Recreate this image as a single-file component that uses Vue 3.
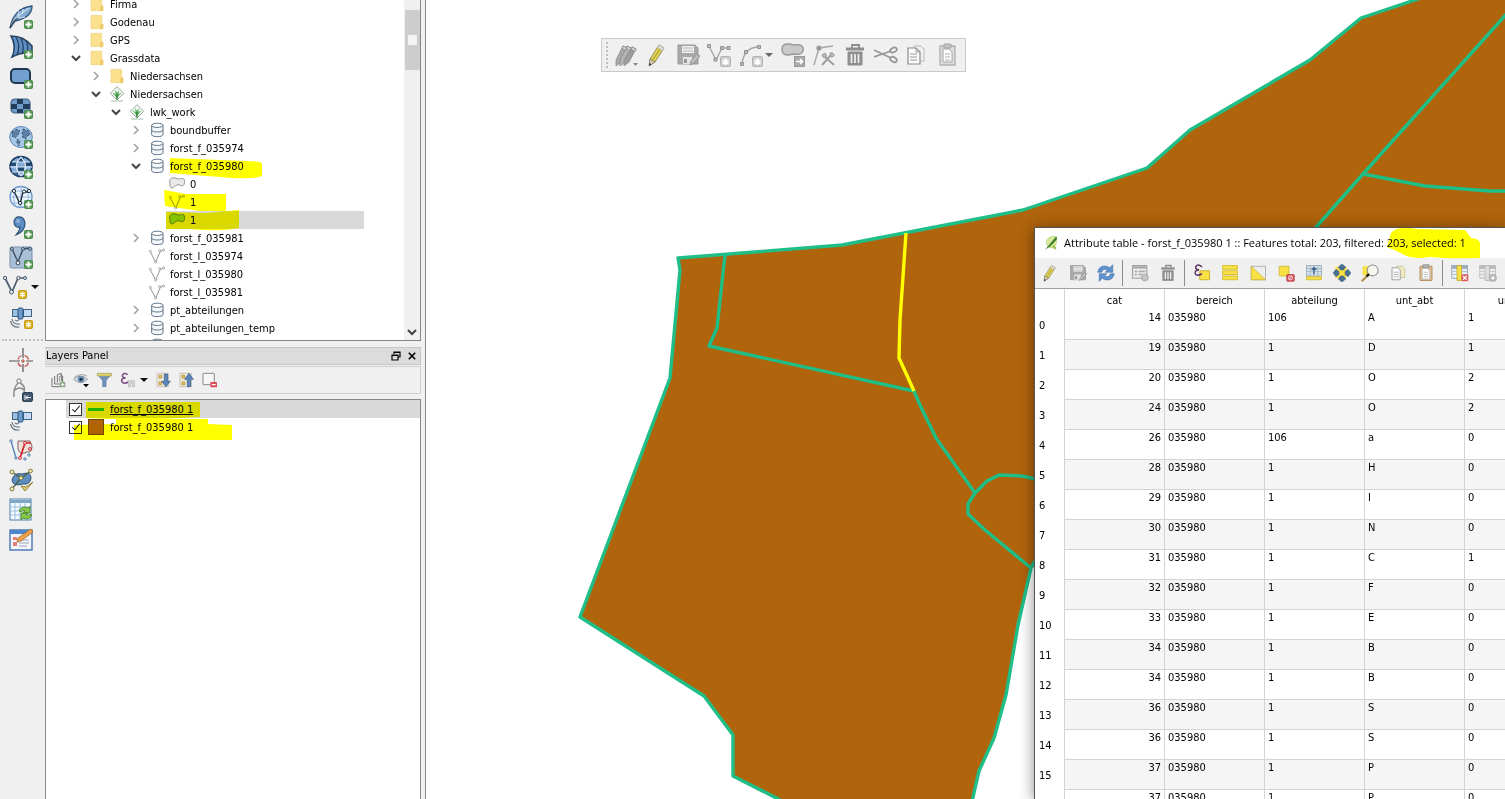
<script setup>
import { ref } from 'vue'

const plus = '<rect x="15.5" y="15.5" width="8" height="8" rx="1" fill="#5a9a58" stroke="#4a8a4c"/><path d="M19.5 16.500v6M16.500 19.500h6" stroke="#fff" stroke-width="1.8"/>'
const star = '<rect x="15.5" y="15.5" width="8" height="8" rx="1" fill="#d9ae1e" stroke="#c79c10"/><path d="M19.5 16.500v6M17 18l5 3M17 21l5-3" stroke="#fff" stroke-width="1.4"/>'
const grayStar = '<rect x="13.5" y="13.5" width="10" height="10" rx="1" fill="#cdcdcd" stroke="#b3b3b3"/><path d="M18.500 15v7M15.500 17l6 3.500M15.500 20.500l6-3.500" stroke="#fff" stroke-width="1.6"/>'
const satellite = '<rect x="3.500" y="4.500" width="7" height="7" fill="#9dbfe2" stroke="#3e6488"/><rect x="14.500" y="4.500" width="8" height="7" fill="#c5daf0" stroke="#3e6488"/><rect x="9" y="3" width="5" height="11" rx="1.500" fill="#6e9ccb" stroke="#234f78"/><path d="M10 14q-1 3-4 1M3 14q1 6 8 5M1.500 16q1.500 7 9 6" fill="none" stroke="#6d7c89" stroke-width="1.200"/>'
const trash = '<path d="M3 6h18" stroke="#8e8e8e" stroke-width="3"/><path d="M9 5V2h7v3" fill="none" stroke="#8e8e8e" stroke-width="1.800"/><path d="M5 9h14v13H5z" fill="#8e8e8e" stroke="#8e8e8e"/><path d="M8.500 11v9M12 11v9M15.500 11v9" stroke="#eee" stroke-width="1.800"/>'
const floppy = '<path d="M2 2h17l3 3v16H2z" fill="#a9a9a9" stroke="#999"/><rect x="6" y="3" width="12" height="7" fill="#efefef"/><path d="M7 5h10M7 8h10" stroke="#b5b5b5"/><rect x="7" y="14" width="9" height="7" fill="#e4e4e4"/><rect x="8" y="16" width="3" height="4" fill="#999"/><path d="M14 22l1-4 6-7 3 2-6 7z" fill="#bcbcbc" stroke="#929292"/>'
const pencil = '<path d="M5 16L14 2l5 3-9 14-5 3z" fill="#e3d455" stroke="#88824c" stroke-width=".9"/><path d="M7.500 17.500L16.500 3.500" stroke="#b4a536" stroke-width="1.300"/><path d="M14 2l5 3-1.500 2.500-5-3z" fill="#e2e2e2" stroke="#aaa" stroke-width=".7"/><path d="M5 16l5 3-6 4z" fill="#d8cdb2" stroke="#7d796c" stroke-width=".8"/><path d="M4 23l.5-3 2 1.300z" fill="#333"/>'

// every glyph is drawn on a 24 x 24 grid
const icons = {
  feather: '<path d="M1 23C3 12 8 3 23 1c0 9-7 13-17 15z" fill="#83a9d1" stroke="#31557d" stroke-width="1.300"/><path d="M2 20C7 12 12 8 20 3M9 12l1-6M13 9l1-5M8 13l8-1" fill="none" stroke="#cbdff3" stroke-width="1.200"/><path d="M1 23q4-8 8-10" fill="none" stroke="#333f4b" stroke-width="1.200"/>' + plus,
  shell: '<path d="M2 1q13 0 21 10v7q-10-1-20 4Q8 11 2 1z" fill="#5f8fc4" stroke="#24415f" stroke-width="1.500"/><path d="M7 2q5 9 1 18M12 4q4 7 1 15M17 6q3 6 1 12" fill="none" stroke="#24415f" stroke-width="1.300"/>' + plus,
  raster: '<rect x="2" y="4" width="19" height="14" rx="4" fill="#729fcf" stroke="#1f3954" stroke-width="2"/>' + plus,
  virtual: '<rect x="2" y="4" width="19" height="14" rx="4" fill="#6f9bcb" stroke="#41607f" stroke-width="1.200"/><path d="M8 4h6v5H8zM2 9h6v5H2zM14 9h7v5h-7zM8 14h6v4H8z" fill="#213d59"/>' + plus,
  globe: '<ellipse cx="12" cy="12" rx="11.300" ry="10.500" fill="#a8c6e6" stroke="#5e88b5"/><path d="M3 7l5-3 3 2-2 4-3 3-3-2zM8 14l3 2-1 5-2-3zM14 4l6 2 1 4-3 1-1 3-3-1-1-4z" fill="#5d7fa3" stroke="#33506e" stroke-dasharray="2 2"/>' + plus,
  grid: '<ellipse cx="12" cy="11.500" rx="11" ry="10" fill="#83abd8" stroke="#183b61" stroke-width="1.500"/><path d="M9 2h6v5H9zM2 7h6v4H2zM16 7h6v4h-6zM9 12h6v4H9zM4 17h5v3zM15 17h5l-5 3z" fill="#23496f"/><path d="M1 12h22M3 7h18M3 17h18M12 2Q3 11 12 21M12 2q9 10 0 19" fill="none" stroke="#dceafa" stroke-width="1.200"/>' + plus,
  wfs: '<ellipse cx="12" cy="12" rx="11" ry="10.500" fill="#edf4fc" stroke="#6f9bcc" stroke-width="1.400"/><path d="M1 12h22M4 6h16M4 18h16M12 1v22M6 3q-3 9 0 18M18 3q3 9 0 18" fill="none" stroke="#8fb3dc" stroke-width=".9"/><path d="M5 6l6 13 3-12h6" fill="none" stroke="#1d2c3b" stroke-width="1.300"/><g fill="#fff" stroke="#1d2c3b"><circle cx="5" cy="6" r="1.600"/><circle cx="11" cy="18" r="1.600"/><circle cx="15" cy="6.500" r="1.600"/><circle cx="20" cy="6" r="1.600"/></g>' + plus,
  comma: '<path d="M5 7c0-7 10-7 11 1 0 7-4 10-9 12 3-4 4-5 4-8C8 13 5 11 5 7z" fill="#5e8ec4" stroke="#30527a" stroke-width="1.200"/><circle cx="9" cy="6" r="2" fill="#8db3dc"/>' + plus,
  newvector: '<rect x="1" y="2" width="22" height="21" rx="1.500" fill="#a9bfd6" stroke="#7891ab"/><path d="M3 4l6 13 5-13 8-1" fill="none" stroke="#3d5268" stroke-width="1.400"/><circle cx="9" cy="18" r="1.900" fill="#fff" stroke="#31465b"/><g fill="#e7eef5" stroke="#31465b"><circle cx="3" cy="4" r="1.400"/><circle cx="14" cy="4" r="1.400"/><circle cx="21" cy="4" r="1.400"/></g>' + plus,
  vedit: '<path d="M2 3l7 14 6-14h8" fill="none" stroke="#4b5b6b" stroke-width="1.700"/><g fill="#dfe7ef" stroke="#4b5b6b"><circle cx="2" cy="3" r="1.700"/><circle cx="8.500" cy="17" r="2"/><circle cx="15.500" cy="3" r="1.700"/><circle cx="22" cy="3" r="1.500"/></g>' + star,
  gps: satellite + star,
  cross: '<path d="M0 13h11M17 13h7M14 0v10M14 16v8" stroke="#555" stroke-width="1.200"/><path d="M9 11.500a5.500 5.500 0 0 1 3.500-4M15.500 7.500a5.500 5.500 0 0 1 4 4M19.500 14.500a5.500 5.500 0 0 1-4 4M12.500 18.500a5.500 5.500 0 0 1-3.500-4M12 13h4M14 11v4" fill="none" stroke="#c0504a" stroke-width="1.200"/>',
  compass: '<circle cx="10" cy="3" r="2.200" fill="none" stroke="#777"/><path d="M9 5q-5 5-4 14M11 5q6 3 4 9M6 12q5-4 9 0" fill="none" stroke="#8a8a8a" stroke-width="1.400"/><rect x="13.500" y="14.500" width="10" height="9" rx="1.500" fill="#40566e" stroke="#2e4359"/><path d="M16 17v5M22 19.500h-5M19 17.500l-2 2 2 2" fill="none" stroke="#fff"/>',
  satellite,
  simplify: '<path d="M9 3h12l2 5q0 7-5 6-7 4-9-3z" fill="#f1dfdc" stroke="#7b6663"/><path d="M2 3l5 17" stroke="#4f80b5" stroke-width="1.300"/><path d="M11 20l5-15h6" fill="none" stroke="#d3202c" stroke-width="1.700"/><g fill="#fff" stroke="#4678ad"><circle cx="2" cy="3" r="1.200"/><circle cx="7" cy="20" r="1.200"/><circle cx="16" cy="21" r="1.200"/><circle cx="20" cy="17" r="1.200"/></g><g fill="#fff" stroke="#d3202c"><circle cx="11" cy="20" r="1.400"/><circle cx="16" cy="5" r="1.400"/><circle cx="21" cy="11" r="1.400"/></g>',
  topology: '<path d="M3 12Q5 4 13 6q9-3 9 4-1 7-8 6-10 3-11-4z" fill="#5e8dc0" stroke="#315477"/><path d="M3 4l9 6L3 21M12 10l10-7" fill="none" stroke="#4e5b36" stroke-width="1.200"/><path d="M12 18l4 5 8-9-7 5z" fill="#e4d174" stroke="#94803a"/><g fill="#f3edb3" stroke="#7b7a40"><circle cx="3" cy="4" r="2"/><circle cx="21.500" cy="3" r="1.900"/><circle cx="12" cy="10" r="1.900"/><circle cx="3" cy="21" r="2"/></g>',
  refreshtable: '<rect x="1" y="1" width="21" height="21" fill="#f4faff" stroke="#4d7fa8"/><path d="M1 2h21v3H1z" fill="#7ba6ca"/><path d="M1 9h21M1 13h21M1 17h21M6 4v18M11 4v18M16 4v18" stroke="#9dc3df"/><path d="M10 13q3-6 9-3l2-2v7h-7l2-2q-3-1-4 1zM23 17q-3 6-9 3l-2 2v-7h7l-2 2q3 1 4-1z" fill="#86c94a" stroke="#3f7e20" stroke-width=".8"/>',
  form: '<rect x="1" y="2" width="22" height="20" fill="#f4f4fb" stroke="#3a6aae" stroke-width="1.300"/><path d="M1 2h22v4H1z" fill="#4e86cb"/><path d="M4 9h4v3H4zM4 14h4v4H4z" fill="#e37f74"/><path d="M10 12h10M10 15h10M10 18h8" stroke="#9ca5b3"/><path d="M8 14l1-4L22 1l2 3L12 13z" fill="#eda14c" stroke="#b06d23" stroke-width=".8"/>',

  folder: '<path d="M3 2h16v20H3z" fill="#fbe08d" stroke="#efd078"/><path d="M18 15h3v7h-4z" fill="#f3d06c" stroke="#e6c05a"/>',
  grass: '<path d="M12 1l10 10-10 10L2 11z" fill="#f3faf3" stroke="#8d9b8e" stroke-width="1.300"/><path d="M12 20Q10 14 5 10q3 0 5 3L9 6l3 4 3-4-1 7q2-3 5-3-5 4-7 10z" fill="#55ab5c"/><path d="M12 20v-8" stroke="#1f6b2c" stroke-width="1.400"/><path d="M3 22.500h18" stroke="#a5bca8" stroke-width="1.500"/>',
  database: '<path d="M4 5v14c0 4 17 4 17 0V5" fill="#f5f8fa" stroke="#5d7286" stroke-width="1.500"/><ellipse cx="12.500" cy="5" rx="8.500" ry="3.200" fill="#fff" stroke="#5d7286" stroke-width="1.500"/><path d="M4 12c0 4 17 4 17 0" fill="none" stroke="#5d7286" stroke-width="1.500"/>',
  polygon: '<path d="M1 7c1-5 7-5 11-3 5 2 10-3 11 2 1 7-1 10-6 8-6-3-7 2-12 4-5 0-3-6-4-11z" fill="#e9e9e9" stroke="#8d8d8d" stroke-width="1.400"/>',
  polygreen: '<path d="M1 7c1-5 7-5 11-3 5 2 10-3 11 2 1 7-1 10-6 8-6-3-7 2-12 4-5 0-3-6-4-11z" fill="#86c22f" stroke="#56741f" stroke-width="1.400"/>',
  line: '<path d="M2 6l8 15 7-16 5-2" fill="none" stroke="#8a8a8a" stroke-width="1.400"/><g fill="#fff" stroke="#8a8a8a"><circle cx="2" cy="5" r="1.600"/><circle cx="10" cy="21" r="1.600"/><circle cx="16" cy="4" r="1.600"/><circle cx="22" cy="3" r="1.600"/></g>',

  addgroup: '<path d="M3 9v13h12M7 6v12h12V6h-4M11 16V4l6-2v12" fill="#f4f4f4" stroke="#727272" stroke-width="1.500"/><path d="M14 6v9" stroke="#777"/><rect x="15" y="15" width="8" height="8" rx="1" fill="#8aa687"/><path d="M19 16.500v5M16.500 19h5" stroke="#fff" stroke-width="1.500"/>',
  eye: '<path d="M1 11q10-10 21 0-10 10-21 0z" fill="#dce3ea" stroke="#8b9299" stroke-width="1.300"/><circle cx="12" cy="11" r="5" fill="#6d90b5"/><circle cx="12" cy="11" r="2.300" fill="#1f3148"/><path d="M2 8q9-7 19-2" fill="none" stroke="#777"/><path d="M15 18h9l-4.500 5z" fill="#000"/>',
  funnel: '<path d="M2 3h21l-8 10v9h-5v-9z" fill="#6f94bd" stroke="#57779c"/><path d="M2 2h21v4H2z" fill="#e4d56b" stroke="#a8a05a"/>',
  expression: '<path d="M13 4Q7 0 5 5q0 4 5 4-7 0-6 5 3 5 10 1" fill="none" stroke="#7c4c86" stroke-width="2.200"/><path d="M14 13h9v9h-3v-6h-3v6h-3z" fill="#ddd" stroke="#aaa"/>',
  expand: '<path d="M3 2h17v20H3z" fill="#ece8d8" stroke="#b7b19e"/><path d="M6 5h4v4H6zM6 15h4v4H6z" fill="#e5be55" stroke="#ad8b35"/><path d="M14 3h5v11h4l-6.500 8L10 14h4z" fill="#5b86bd" stroke="#355985"/>',
  collapse: '<path d="M3 2h17v20H3z" fill="#ece8d8" stroke="#b7b19e"/><path d="M6 5h4v4H6zM6 15h4v4H6z" fill="#e5be55" stroke="#ad8b35"/><path d="M14 22h5V11h4l-6.500-9L10 11h4z" fill="#5b86bd" stroke="#355985"/>',
  remove: '<rect x="3" y="2" width="17" height="17" rx="1" fill="#f7f7f7" stroke="#888" stroke-width="1.500"/><rect x="14" y="15" width="10" height="8" rx="1" fill="#da4b57"/><path d="M16 19h6" stroke="#fff" stroke-width="1.800"/>',

  pencils: '<g stroke="#8a8a8a" stroke-width=".8"><path d="M2 17L9 3l4 2-6 14-5 4z" fill="#a9a9a9"/><path d="M6 17l7-14 4 2-6 14-5 4z" fill="#b5b5b5"/><path d="M10 17l8-13 4 2-7 13-5 4z" fill="#9d9d9d"/><path d="M9 3l4 2-1 2.500-4-2zM13 3l4 2-1 2.500-4-2zM18 4l4 2-1 2.500-4-2z" fill="#d6d6d6"/></g><path d="M19 20h5l-2.500 3z" fill="#888"/>',
  pencil,
  floppy,
  addline: '<path d="M2 3l7 14 6-12h7" fill="none" stroke="#a5a5a5" stroke-width="1.400"/><g fill="#bbb" stroke="#929292"><path d="M.5 1.500h3v3h-3zM7 15h3v3H7zM13.500 3.500h3v3h-3zM20 3.500h3v3h-3z"/></g>' + grayStar,
  addcurve: '<path d="M3 21Q5 4 20 4" fill="none" stroke="#a5a5a5" stroke-width="1.400"/><g fill="#bbb" stroke="#929292"><path d="M1.500 19.500h3v3h-3zM5.500 7.500h3v3h-3zM18.500 2.500h3v3h-3z"/></g>' + grayStar,
  move: '<path d="M1 6c0-7 9-5 12-4 8-1 10 2 9 6-2 5-7 3-10 3C5 13 1 12 1 6z" fill="#c9c9c9" stroke="#999" stroke-width="1.400"/><rect x="13.500" y="13.500" width="10" height="10" fill="#ababab" stroke="#999"/><path d="M15 18.500h6M19 16l2.500 2.500L19 21" fill="none" stroke="#fff" stroke-width="1.600"/>',
  node: '<path d="M2 22L7 5l14-2" fill="none" stroke="#aaa" stroke-width="1.500"/><circle cx="7" cy="5" r="2.600" fill="#999"/><path d="M10 22l10-11M12 13l10 9" stroke="#a0a0a0" stroke-width="2"/><path d="M10 12l3-2 2 3-3 2zM18 10q4-1 4 3l-3 1z" fill="#bbb" stroke="#999"/>',
  trash,
  scissors: '<path d="M0 7l17 8M0 14l17-6" stroke="#999" stroke-width="1.700"/><g fill="none" stroke="#929292" stroke-width="1.700"><ellipse cx="19.500" cy="7" rx="3.500" ry="2.300" transform="rotate(-25 19.500 7)"/><ellipse cx="19.500" cy="16.500" rx="3.500" ry="2.300" transform="rotate(30 19.500 16.500)"/></g>',
  copy: '<path d="M9 3h7l3 3v12H9z" fill="#f1f1f1" stroke="#b8b8b8"/><path d="M3 5h8l4 4v12H3z" fill="#fbfbfb" stroke="#8b8b8b" stroke-width="1.200"/><path d="M5 11h7M5 14h7M5 17h7M11 5v4h4" fill="none" stroke="#999"/>',
  paste: '<path d="M4 3h15v19H4z" fill="#dcdcdc" stroke="#b0b0b0" stroke-width="1.300"/><path d="M8 1h7v4H8z" fill="#c2c2c2" stroke="#aaa"/><path d="M7 6h6l3 3v10H7z" fill="#fff" stroke="#a5a5a5"/><path d="M9 11h5M9 14h5M9 17h5" stroke="#aaa"/>',

  refresh: '<path d="M1 11Q3 1 13 3l4 2 4-4v10H11l3-3q-6-3-8 3zM23 13q-2 10-12 8l-4-2-4 4V13h10l-3 3q6 3 8-3z" fill="#5f93cf" stroke="#3a6ca8" stroke-width=".8"/>',
  tablegray: '<path d="M2 2h19v17H2z" fill="#e9e9e9" stroke="#a1a1a1" stroke-width="1.500"/><path d="M2 3h19v3H2z" fill="#a8a8a8"/><path d="M5 10h3M10 10h9M5 14h3M10 14h5" stroke="#aaa" stroke-width="1.800"/><circle cx="18.500" cy="18" r="4.500" fill="#c5c5c5" stroke="#999"/>',
  selexpr: '<path d="M9 9h13v12H9z" fill="#f8e145" stroke="#c3a616"/><path d="M12 4Q7-1 4 3q-2 4 4 5-6 0-5 5 2 4 9 0" fill="none" stroke="#593466" stroke-width="2"/>',
  selall: '<path d="M2 2h20v5H2zM2 9h20v5H2zM2 16h20v5H2z" fill="#f8e145" stroke="#d2b31c"/>',
  invert: '<path d="M3 3h19v18H3z" fill="#ededed" stroke="#a0a0a0"/><path d="M3 3v18h19z" fill="#f8e145" stroke="#cbb024"/>',
  deselect: '<path d="M3 3h13v13H3z" fill="#f8e145" stroke="#cbb024"/><rect x="13" y="14" width="10" height="9" rx="1" fill="#d9525a" stroke="#b53a42"/><circle cx="18" cy="18.500" r="2.700" fill="none" stroke="#fff"/><path d="M16 20.500l4-4" stroke="#fff"/>',
  totop: '<path d="M2 2h20v14H2z" fill="#d4e1ea" stroke="#8ba0af"/><path d="M2 6h20M2 10h20M7 2v14M17 2v14" stroke="#9eb1c0"/><path d="M2 17h20v4H2z" fill="#f8e145" stroke="#cbb024"/><path d="M11 14V8H8l4-5 4 5h-3v6z" fill="#3b658f"/>',
  pan: '<path d="M3 4h15v15H3z" fill="#f8e145"/><path d="M12 0l5 4-3 4h-4L7 4zM12 24l-5-4 3-4h4l3 4zM0 12l4-5 4 3v4l-4 3zM24 12l-4 5-4-3v-4l4-3z" fill="#4c6f94" stroke="#365679" stroke-width=".6"/>',
  zoomto: '<path d="M2 3h11v12H2z" fill="#f8e145"/><circle cx="15.500" cy="8.500" r="7.300" fill="#f7f7f2" fill-opacity=".9" stroke="#8a8a8a" stroke-width="1.400"/><path d="M10 14l-9 9" stroke="#b08b40" stroke-width="2.600"/><path d="M10.500 13.500l-3 3" stroke="#111" stroke-width="3"/>',
  copyrow: '<path d="M10 3h8l3 3v12H10z" fill="#efeac0" stroke="#c4bd8a"/><path d="M4 5h8l3 3v13H4z" fill="#fbfbfb" stroke="#a0a0a0" stroke-width="1.300"/><path d="M6 11h7M6 14h7M6 17h7" stroke="#aaa"/>',
  pasterow: '<path d="M4 3h16v19H4z" fill="#e0c097" stroke="#b5935f" stroke-width="1.300"/><path d="M8 1h8v4H8z" fill="#b8b8b8" stroke="#888"/><path d="M7 6h7l3 3v11H7z" fill="#fff" stroke="#b5b5b5"/><path d="M9 11h6M9 14h6M9 17h6" stroke="#aaa"/>',
  delcol: '<path d="M1 2h21v17H1z" fill="#e9eff4" stroke="#8397a8"/><path d="M1 2h21v4H1zM2 10h5M2 14h5M15 10h6M15 14h6" fill="#9db0c1" stroke="#9db0c1"/><path d="M8 2h6v20H8z" fill="#f8e145" stroke="#c3a616"/><rect x="14" y="14" width="9" height="9" rx="1" fill="#dd5a5e"/><path d="M16 16l5 5M21 16l-5 5" stroke="#fff" stroke-width="1.500"/>',
  newcol: '<path d="M1 2h21v17H1z" fill="#ececec" stroke="#b1b1b1"/><path d="M1 2h21v4H1zM2 10h5M2 14h5M15 10h6" fill="#bbb" stroke="#bbb"/><path d="M8 2h6v20H8z" fill="#ddd" stroke="#b1b1b1"/><rect x="14" y="14" width="9" height="9" rx="3" fill="#bdbdbd" stroke="#a5a5a5"/><circle cx="18.500" cy="18.500" r="2" fill="#fff"/>',
  logo: '<path d="M5 12Q5 3 16 2l4 1q2 12-5 16-8 2-10-7z" fill="#d8ea9a" stroke="#b3cd72"/><path d="M3 22L20 2l1 4-5 6-5 5z" fill="#3d7a2e"/><path d="M15 16l4 5" stroke="#9cc455" stroke-width="4"/>'
}

const sourceTools = [
  { icon: 'feather', name: 'Add vector layer' },
  { icon: 'shell', name: 'Add SpatiaLite layer' },
  { icon: 'raster', name: 'Add raster layer' },
  { icon: 'virtual', name: 'Add virtual layer' },
  { icon: 'globe', name: 'Add WMS layer' },
  { icon: 'grid', name: 'Add WCS layer' },
  { icon: 'wfs', name: 'Add WFS layer' },
  { icon: 'comma', name: 'Add delimited text' },
  { icon: 'newvector', name: 'Add GRASS vector' },
  { icon: 'vedit', name: 'New shapefile', menu: true },
  { icon: 'gps', name: 'New GPX layer' }
]

const pluginTools = [
  { icon: 'cross', name: 'Coordinate capture' },
  { icon: 'compass', name: 'Import drawing' },
  { icon: 'satellite', name: 'GPS tools' },
  { icon: 'simplify', name: 'Geometry checker' },
  { icon: 'topology', name: 'Topology checker' },
  { icon: 'refreshtable', name: 'Refresh tables' },
  { icon: 'form', name: 'Edit form' }
]

const layerTools = [
  { icon: 'addgroup', name: 'Add group' },
  { icon: 'eye', name: 'Manage visibility' },
  { icon: 'funnel', name: 'Filter legend' },
  { icon: 'expression', name: 'Filter by expression', menu: true },
  { icon: 'expand', name: 'Expand all' },
  { icon: 'collapse', name: 'Collapse all' },
  { icon: 'remove', name: 'Remove layer' }
]

const editTools = [
  { icon: 'pencils', name: 'Current edits' },
  { icon: 'pencil', name: 'Toggle editing' },
  { icon: 'floppy', name: 'Save edits' },
  { icon: 'addline', name: 'Add feature' },
  { icon: 'addcurve', name: 'Add circular string', menu: true },
  { icon: 'move', name: 'Move feature' },
  { icon: 'node', name: 'Node tool' },
  { icon: 'trash', name: 'Delete selected' },
  { icon: 'scissors', name: 'Cut features' },
  { icon: 'copy', name: 'Copy features' },
  { icon: 'paste', name: 'Paste features' }
]

const tableTools = [
  [
    { icon: 'pencil', name: 'Toggle editing' },
    { icon: 'floppy', name: 'Save edits' },
    { icon: 'refresh', name: 'Reload the table' }
  ],
  [
    { icon: 'tablegray', name: 'Add feature' },
    { icon: 'trash', name: 'Delete selected' }
  ],
  [
    { icon: 'selexpr', name: 'Select by expression' },
    { icon: 'selall', name: 'Select all' },
    { icon: 'invert', name: 'Invert selection' },
    { icon: 'deselect', name: 'Deselect all' },
    { icon: 'totop', name: 'Move selection to top' },
    { icon: 'pan', name: 'Pan to selected' },
    { icon: 'zoomto', name: 'Zoom to selected' },
    { icon: 'copyrow', name: 'Copy rows' },
    { icon: 'pasterow', name: 'Paste rows' }
  ],
  [
    { icon: 'delcol', name: 'Delete field' },
    { icon: 'newcol', name: 'New field' }
  ]
]

const tree = [
  { level: 0, state: 'closed', icon: 'folder', label: 'Firma' },
  { level: 0, state: 'closed', icon: 'folder', label: 'Godenau' },
  { level: 0, state: 'closed', icon: 'folder', label: 'GPS' },
  { level: 0, state: 'open', icon: 'folder', label: 'Grassdata' },
  { level: 1, state: 'closed', icon: 'folder', label: 'Niedersachsen' },
  { level: 1, state: 'open', icon: 'grass', label: 'Niedersachsen' },
  { level: 2, state: 'open', icon: 'grass', label: 'lwk_work' },
  { level: 3, state: 'closed', icon: 'database', label: 'boundbuffer' },
  { level: 3, state: 'closed', icon: 'database', label: 'forst_f_035974' },
  { level: 3, state: 'open', icon: 'database', label: 'forst_f_035980', mark: 'M24 1L100 4q16 0 16 3v12q-6 3-30 2L24 16z' },
  { level: 4, icon: 'polygon', label: '0' },
  { level: 4, icon: 'line', label: '1', mark: 'M-2 -3L20 1H60V18H34L-1 13z' },
  { level: 4, icon: 'polygreen', label: '1', selected: true, mark: 'M0 1L40 2 73-1V17q-20 4-50 1H0z' },
  { level: 3, state: 'closed', icon: 'database', label: 'forst_f_035981' },
  { level: 3, icon: 'line', label: 'forst_l_035974' },
  { level: 3, icon: 'line', label: 'forst_l_035980' },
  { level: 3, icon: 'line', label: 'forst_l_035981' },
  { level: 3, state: 'closed', icon: 'database', label: 'pt_abteilungen' },
  { level: 3, state: 'closed', icon: 'database', label: 'pt_abteilungen_temp' },
  { level: 3, icon: 'database', label: '' }
]

const layers = ref([
  { id: 1, name: 'forst_f_035980 1', type: 'line', visible: true, selected: true, mark: 'M20 2H134V17Q70 21 20 18z' },
  { id: 2, name: 'forst_f_035980 1', type: 'fill', visible: true, selected: false, mark: 'M50 1H142V6L166 7V22H8V7L50 6z' }
])

const columns = ['cat', 'bereich', 'abteilung', 'unt_abt', 'unt_fla']

const rows = [
  [14, '035980', '106', 'A', '1'],
  [19, '035980', '1', 'D', '1'],
  [20, '035980', '1', 'O', '2'],
  [24, '035980', '1', 'O', '2'],
  [26, '035980', '106', 'a', '0'],
  [28, '035980', '1', 'H', '0'],
  [29, '035980', '1', 'I', '0'],
  [30, '035980', '1', 'N', '0'],
  [31, '035980', '1', 'C', '1'],
  [32, '035980', '1', 'F', '0'],
  [33, '035980', '1', 'E', '0'],
  [34, '035980', '1', 'B', '0'],
  [34, '035980', '1', 'B', '0'],
  [36, '035980', '1', 'S', '0'],
  [36, '035980', '1', 'S', '0'],
  [37, '035980', '1', 'P', '0'],
  [37, '035980', '1', 'P', '0']
]
</script>

<template>
  <div class="app">
    <nav class="side-toolbar">
      <button v-for="tool in sourceTools" :key="tool.name" class="side-btn" :aria-label="tool.name">
        <svg class="icon-lg" viewBox="0 0 24 24" v-html="icons[tool.icon]"></svg>
        <span v-if="tool.menu" class="caret"></span>
      </button>
      <div class="side-sep"></div>
      <button v-for="tool in pluginTools" :key="tool.name" class="side-btn" :aria-label="tool.name">
        <svg class="icon-lg" viewBox="0 0 24 24" v-html="icons[tool.icon]"></svg>
      </button>
    </nav>

    <aside class="docks">
      <section class="browser">
        <ul class="tree">
          <li
            v-for="(item, i) in tree"
            :key="i"
            class="tree-row"
            :style="{ paddingLeft: item.level * 20 + 'px' }"
          >
            <span class="expander">
              <svg v-if="item.state === 'closed'" width="10" height="10" viewBox="0 0 10 10"><path d="M3 1l4 4-4 4" fill="none" stroke="#a0a0a0" stroke-width="1.5" /></svg>
              <svg v-if="item.state === 'open'" width="10" height="10" viewBox="0 0 10 10"><path d="M1 3l4 4 4-4" fill="none" stroke="#444" stroke-width="2" /></svg>
            </span>
            <span class="tree-cell" :class="{ selected: item.selected }">
              <svg class="icon-sm" viewBox="0 0 24 24" v-html="icons[item.icon]"></svg>
              <span class="tree-label">{{ item.label }}</span>
              <svg v-if="item.mark" class="marker"><path :d="item.mark" fill="#ff0" /></svg>
            </span>
          </li>
        </ul>
        <div class="scrollbar">
          <div class="thumb"><span class="grip"></span></div>
          <svg class="scroll-down" width="10" height="10" viewBox="0 0 10 10"><path d="M1 3l4 4 4-4" fill="none" stroke="#444" stroke-width="2" /></svg>
        </div>
      </section>

      <section class="layers">
        <header class="dock-title">
          <h2>Layers Panel</h2>
          <button class="dock-btn" aria-label="Float">
            <svg width="10" height="10" viewBox="0 0 10 10"><path d="M3 3V1h6v5H7M1 4h6v5H1zM3 1.500h6M1 4.500h6" fill="none" stroke="#000" stroke-width="1.2" /></svg>
          </button>
          <button class="dock-btn" aria-label="Close">
            <svg width="8" height="8" viewBox="0 0 10 10"><path d="M1 1l8 8M9 1L1 9" stroke="#000" stroke-width="2" /></svg>
          </button>
        </header>
        <div class="layer-tools">
          <button v-for="tool in layerTools" :key="tool.name" class="layer-btn" :class="{ menu: tool.menu }" :aria-label="tool.name">
            <svg class="icon-sm" viewBox="0 0 24 24" v-html="icons[tool.icon]"></svg>
            <span v-if="tool.menu" class="caret"></span>
          </button>
        </div>
        <div class="layer-list">
          <label v-for="layer in layers" :key="layer.id" class="layer-row" :class="{ selected: layer.selected }">
            <input v-model="layer.visible" type="checkbox">
            <span class="swatch" :class="layer.type"></span>
            <span class="layer-name">{{ layer.name }}</span>
            <svg class="marker"><path :d="layer.mark" fill="#ff0" /></svg>
          </label>
        </div>
      </section>
    </aside>

    <main class="canvas">
      <svg class="map" viewBox="426 0 1079 799" preserveAspectRatio="xMinYMin slice">
        <path
          class="forest"
          d="M678 258L842 245 1023 210 1147 168 1190 130 1310 60 1361 18 1430-5 1530-5V560H1060L1031 568 1018 625 1006 695 994 738 979 771 970 810H800L733 776V735L704 696 580 617 670 378 680 270z"
        />
        <g class="border">
          <path d="M1040 552L1031 568 1018 625 1006 695 994 738 979 771 970 810" />
          <path d="M800 810L733 776V735L704 696 580 617 670 378 680 270 678 258 842 245 1023 210 1147 168 1190 130 1310 60 1361 18 1430-5" />
          <path d="M725 255L717 328 709 346 914 391 920 405 936 438 975 493 987 481 999 475 1022 476 1040 480" />
          <path d="M975 493L968 504V514L985 530 1031 568" />
          <path d="M1510 10L1363 174 1310 234M1363 174L1425 186 1490 191H1510" />
        </g>
        <path class="picked" d="M906 233L900 320 899 358 914 391" />
      </svg>

      <div class="edit-toolbar">
        <span class="handle"></span>
        <button v-for="tool in editTools" :key="tool.name" class="edit-btn" :class="{ menu: tool.menu }" :aria-label="tool.name">
          <svg class="icon-lg" viewBox="0 0 24 24" v-html="icons[tool.icon]"></svg>
          <span v-if="tool.menu" class="caret"></span>
        </button>
      </div>

      <section class="window">
        <header class="window-title">
          <svg class="icon-sm" viewBox="0 0 24 24" v-html="icons.logo"></svg>
          <h1>
            Attribute table - forst_f_035980 1 :: Features total: 203, filtered:
            <span class="counts">203, selected: 1<svg class="marker"><path d="M4 4Q10-4 30 0L78 1q4 5 6 8 10 0 9 8v12q-30 1-50-1-20 3-29-4L0 18z" fill="#ff0" /></svg></span>
          </h1>
        </header>
        <div class="table-tools">
          <div v-for="(group, i) in tableTools" :key="i" class="tool-group">
            <button v-for="tool in group" :key="tool.name" class="table-btn" :aria-label="tool.name">
              <svg class="icon-md" viewBox="0 0 24 24" v-html="icons[tool.icon]"></svg>
            </button>
          </div>
        </div>
        <table class="attributes">
          <thead>
            <tr>
              <th class="row-no"></th>
              <th v-for="col in columns" :key="col">{{ col }}</th>
            </tr>
          </thead>
          <tbody>
            <tr v-for="(row, i) in rows" :key="i">
              <th class="row-no">{{ i }}</th>
              <td v-for="(value, c) in row" :key="c" :class="{ number: c === 0 }">{{ value }}</td>
            </tr>
          </tbody>
        </table>
      </section>
    </main>
  </div>
</template>

<style>
body {
  margin: 0;
  overflow: hidden;
}
</style>

<style scoped>
.app {
  display: flex;
  height: 100vh;
  overflow: hidden;
  background: #f0f0f0;
  color: #000;
  font: 11px/18px "DejaVu Sans Condensed", "Noto Sans", sans-serif;
}

button {
  display: flex;
  align-items: center;
  justify-content: center;
  flex: none;
  padding: 0;
  border: 0;
  background: none;
}

svg {
  flex: none;
}

h1,
h2 {
  margin: 0;
  font-size: 11px;
  font-weight: normal;
}

.icon-lg {
  width: 24px;
  height: 24px;
}

.icon-md {
  width: 18px;
  height: 18px;
}

.icon-sm {
  width: 16px;
  height: 16px;
}

.caret {
  flex: none;
  border: 4px solid transparent;
  border-top-color: #111;
  border-bottom: 0;
}

/* highlighter pen, lies over the text */
.marker {
  position: absolute;
  top: 0;
  left: 0;
  width: 1px;
  height: 1px;
  overflow: visible;
  mix-blend-mode: multiply;
  pointer-events: none;
}

.side-toolbar {
  flex: none;
  width: 45px;
  padding-top: 2px;
  box-sizing: border-box;
}

.side-btn {
  width: 42px;
  height: 30px;
}

.side-btn:has(.caret) {
  gap: 4px;
}

.side-sep {
  height: 6px;
  margin: 7px 2px 0;
  border-top: 2px dotted #c3c3c3;
  box-sizing: border-box;
}

.docks {
  display: flex;
  flex-direction: column;
  flex: none;
  width: 376px;
  margin-right: 4px;
}

.browser {
  display: flex;
  flex: none;
  height: 340px;
  overflow: hidden;
  background: #fff;
  border: 1px solid #828790;
  border-top: 0;
  box-sizing: content-box;
}

.tree {
  flex: 1;
  margin: -5px 40px 0 20px;
  padding: 0;
  list-style: none;
}

.tree-row {
  display: flex;
  height: 18px;
}

.expander {
  display: flex;
  align-items: center;
  justify-content: center;
  width: 20px;
}

.tree-cell {
  position: relative;
  display: flex;
  flex: 1;
  align-items: center;
  gap: 5px;
  padding-left: 3px;
  white-space: nowrap;
}

.tree-label,
.layer-name {
  padding-top: 1px;
}

.selected {
  background: #d9d9d9;
}

.scrollbar {
  display: flex;
  flex-direction: column;
  align-items: center;
  width: 16px;
  padding: 10px 0 3px;
  box-sizing: border-box;
  background: #f0f0f0;
}

.thumb {
  display: flex;
  align-items: center;
  justify-content: center;
  width: 15px;
  height: 60px;
  background: #cdcdcd;
}

.grip {
  width: 9px;
  height: 10px;
  background: #f3f3f3;
}

.scroll-down {
  margin-top: auto;
}

.layers {
  display: flex;
  flex: 1;
  flex-direction: column;
  min-height: 0;
  margin-top: 6px;
}

.dock-title {
  display: flex;
  align-items: center;
  height: 18px;
  padding-left: 1px;
  background: #dcdcdc;
  border: 1px solid #c6c6c6;
  border-width: 1px 1px 1px 0;
  box-sizing: border-box;
}

.dock-title h2 {
  flex: 1;
}

.dock-btn {
  width: 16px;
  height: 16px;
}

.layer-tools {
  display: flex;
  height: 28px;
  margin-top: 1px;
  padding-left: 1px;
  border: 1px solid #cfcfcf;
  border-left: 0;
  box-sizing: border-box;
}

.layer-btn {
  width: 23px;
}

.layer-btn.menu {
  gap: 5px;
  width: 36px;
  padding-left: 4px;
  box-sizing: border-box;
  justify-content: flex-start;
}

.layer-list {
  flex: 1;
  margin-top: 5px;
  background: #fff;
  border: 1px solid #828790;
  border-bottom: 0;
}

.layer-row {
  position: relative;
  display: flex;
  align-items: center;
  height: 18px;
  margin-left: 20px;
  padding-left: 3px;
}

.layer-row input {
  position: relative;
  width: 13px;
  height: 13px;
  margin: 0 6px 0 0;
  appearance: none;
  background: #fff;
  border: 1px solid #333;
}

.layer-row input:checked::after {
  content: "";
  display: block;
  width: 3px;
  height: 7px;
  margin: 0 auto;
  border: solid #222;
  border-width: 0 1px 1px 0;
  transform: rotate(40deg);
}

.swatch {
  width: 16px;
  margin-right: 6px;
  box-sizing: border-box;
}

.swatch.line {
  height: 3px;
  background: #22b32a;
}

.swatch.fill {
  height: 16px;
  background: #b0640c;
  border: 1px solid #6f4512;
}

.layer-row.selected .layer-name {
  text-decoration: underline;
}

.canvas {
  position: relative;
  flex: 1;
  min-width: 0;
  overflow: hidden;
  background: #fff;
  border-left: 1px solid #828790;
}

.map {
  display: block;
  width: 100%;
  height: 100%;
}

.forest {
  fill: #b0640c;
}

.border path {
  fill: none;
  stroke: #1fbe87;
  stroke-width: 3.4;
  stroke-linejoin: round;
}

.picked {
  fill: none;
  stroke: #ff0;
  stroke-width: 3.4;
}

.edit-toolbar {
  position: absolute;
  top: 38px;
  left: 175px;
  display: flex;
  align-items: center;
  height: 34px;
  padding: 0 2px 0 4px;
  box-sizing: border-box;
  background: #f0f0f0;
  border: 1px solid #c9c9c9;
}

.handle {
  height: 26px;
  margin-right: 2px;
  border-left: 2px dotted #bdbdbd;
}

.edit-btn {
  width: 31px;
}

.edit-btn.menu {
  gap: 2px;
  width: 43px;
}

.edit-btn .caret {
  border-top-color: #666;
}

.window {
  position: absolute;
  top: 227px;
  right: 0;
  bottom: 0;
  left: 608px;
  overflow: hidden;
  background: #fff;
  border: solid #555;
  border-width: 1px 0 0 1px;
  box-shadow: 0 2px 14px rgba(0, 0, 0, .45);
}

.window-title {
  display: flex;
  align-items: center;
  gap: 5px;
  height: 30px;
  padding-left: 8px;
}

.window-title h1 {
  font: 11px/18px "Open Sans", "Noto Sans", sans-serif;
  white-space: nowrap;
}

.counts {
  position: relative;
  display: inline-block;
}

.counts .marker {
  top: -5px;
}

.table-tools {
  display: flex;
  height: 31px;
  padding-left: 1px;
  background: #f0f0f0;
  border-bottom: 1px solid #a0a0a0;
  box-sizing: border-box;
}

.tool-group {
  display: flex;
  flex: none;
}

.tool-group + .tool-group {
  margin: 2px 0 2px 2px;
  padding-left: 3px;
  border-left: 1px solid #8c8c8c;
}

.table-btn {
  width: 28px;
}

.attributes {
  width: 530px;
  table-layout: fixed;
  border-collapse: separate;
  border-spacing: 0;
}

.attributes th,
.attributes td {
  height: 30px;
  padding: 1px 3px 0;
  box-sizing: border-box;
  border: solid #d4d4d4;
  border-width: 0 1px 1px 0;
  font-weight: normal;
  line-height: 14px;
  text-align: left;
  vertical-align: top;
}

.attributes thead th {
  height: 21px;
  padding-top: 2px;
  border-bottom: 0;
  text-align: center;
  vertical-align: middle;
}

.attributes .row-no {
  width: 30px;
  padding: 2px 0 0 4px;
  border-bottom: 0;
  vertical-align: middle;
}

.attributes tbody tr:nth-child(even) td {
  background: #f5f5f5;
}

.attributes .number {
  text-align: right;
}
</style>
